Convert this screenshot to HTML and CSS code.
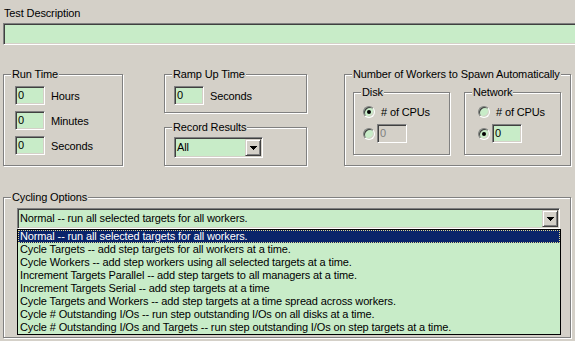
FILE: index.html
```html
<!DOCTYPE html>
<html lang="en">
<head>
    <meta charset="UTF-8">
    <meta name="viewport" content="width=device-width, initial-scale=1.0">
    <title>Test Setup</title>
    <link rel="stylesheet" href="styles.css">
</head>
<body>

<div class="dialog">
    <div class="desc-label">Test Description</div>
    <div class="edit desc-edit"></div>

    <div class="top-row">
        <!-- Run Time -->
        <div class="group run-time">
            <span class="legend">Run Time</span>
            <div class="field-row"><div class="edit small">0</div><span>Hours</span></div>
            <div class="field-row"><div class="edit small">0</div><span>Minutes</span></div>
            <div class="field-row"><div class="edit small">0</div><span>Seconds</span></div>
        </div>

        <div class="middle-col">
            <div class="group ramp">
                <span class="legend">Ramp Up Time</span>
                <div class="field-row"><div class="edit small">0</div><span>Seconds</span></div>
            </div>
            <div class="group record">
                <span class="legend">Record Results</span>
                <div class="combo record-combo">
                    <span class="combo-text">All</span>
                    <span class="combo-btn"><svg width="7" height="4" viewBox="0 0 7 4"><path d="M0 0h7v1h-1v1h-1v1h-1v1h-1v-1h-1v-1h-1v-1h-1z"/></svg></span>
                </div>
            </div>
        </div>

        <!-- Number of Workers -->
        <div class="group workers">
            <span class="legend">Number of Workers to Spawn Automatically</span>
            <div class="group sub disk">
                <span class="legend">Disk</span>
                <div class="radio-row first"><span class="radio checked"></span><span>#&nbsp;of CPUs</span></div>
                <div class="radio-row second"><span class="radio"></span><div class="edit small disabled">0</div></div>
            </div>
            <div class="group sub network">
                <span class="legend">Network</span>
                <div class="radio-row first"><span class="radio"></span><span>#&nbsp;of CPUs</span></div>
                <div class="radio-row second"><span class="radio checked"></span><div class="edit small">0</div></div>
            </div>
        </div>
    </div>

    <!-- Cycling Options -->
    <div class="group cycling">
        <span class="legend">Cycling Options</span>
        <div class="combo cycle-combo">
            <span class="combo-text">Normal -- run all selected targets for all workers.</span>
            <span class="combo-btn"><svg width="7" height="4" viewBox="0 0 7 4"><path d="M0 0h7v1h-1v1h-1v1h-1v1h-1v-1h-1v-1h-1v-1h-1z"/></svg></span>
        </div>
        <div class="droplist">
            <div class="item selected">Normal -- run all selected targets for all workers.</div>
            <div class="item">Cycle Targets -- add step targets for all workers at a time.</div>
            <div class="item">Cycle Workers -- add step workers using all selected targets at a time.</div>
            <div class="item">Increment Targets Parallel -- add step targets to all managers at a time.</div>
            <div class="item">Increment Targets Serial -- add step targets at a time</div>
            <div class="item">Cycle Targets and Workers -- add step targets at a time spread across workers.</div>
            <div class="item">Cycle # Outstanding I/Os -- run step outstanding I/Os on all disks at a time.</div>
            <div class="item">Cycle # Outstanding I/Os and Targets -- run step outstanding I/Os on step targets at a time.</div>
        </div>
    </div>
</div>

</body>
</html>
```

FILE: styles.css
```css
* {
    box-sizing: border-box;
}
body {
    margin: 0;
    width: 575px;
    height: 341px;
    overflow: hidden;
    background-color: #d4d0c8;
    font-family: "Liberation Sans", Arial, sans-serif;
    font-size: 11px;
    letter-spacing: -0.13px;
    color: #000;
}
.dialog {
    padding: 7px 0 0 3px;
}
.desc-label {
    height: 16px;
    line-height: 13px;
    padding-left: 1px;
}

/* sunken edit box */
.edit {
    border: 1px solid;
    border-color: #808080 #fff #fff #808080;
    box-shadow: inset 1px 1px 0 #404040, inset -1px -1px 0 #d4d0c8;
    background-color: #c8ecc8;
    padding: 0 2px;
    white-space: nowrap;
}
.desc-edit {
    width: 580px;
    height: 22px;
}
.edit.small {
    width: 30px;
    height: 19px;
    line-height: 17px;
}
.edit.disabled {
    background-color: #d4d0c8;
    color: #808080;
}

/* etched group box */
.group {
    position: relative;
    border: 1px solid #808080;
    box-shadow: inset 1px 1px 0 #fff, 1px 1px 0 #fff;
}
.legend {
    position: absolute;
    top: -7px;
    left: 7px;
    padding: 0 1px;
    line-height: 13px;
    background-color: #d4d0c8;
    white-space: nowrap;
}

.top-row {
    display: flex;
    align-items: flex-start;
    margin-top: 29px;
}
.run-time {
    width: 120px;
    height: 92px;
    padding: 11px 0 0 11px;
    display: flex;
    flex-direction: column;
    gap: 6px;
}
.field-row {
    display: flex;
    align-items: center;
    gap: 6px;
}
.middle-col {
    margin-left: 41px;
    display: flex;
    flex-direction: column;
    gap: 14px;
}
.ramp {
    width: 143px;
    height: 39px;
    padding: 11px 0 0 9px;
}
.record {
    width: 143px;
    height: 39px;
    padding: 9px 0 0 9px;
}

/* combo box */
.combo {
    display: flex;
    border: 1px solid;
    border-color: #808080 #fff #fff #808080;
    box-shadow: inset 1px 1px 0 #404040, inset -1px -1px 0 #d4d0c8;
    background-color: #c8ecc8;
    padding: 1px;
    height: 21px;
}
.combo-text {
    flex: 1;
    padding-left: 1px;
    line-height: 17px;
    white-space: nowrap;
    overflow: hidden;
}
.combo-btn {
    width: 16px;
    height: 17px;
    display: flex;
    align-items: center;
    justify-content: center;
    background-color: #d4d0c8;
    border: 1px solid;
    border-color: #d4d0c8 #404040 #404040 #d4d0c8;
    box-shadow: inset 1px 1px 0 #fff, inset -1px -1px 0 #808080;
}
.combo-btn svg {
    display: block;
    shape-rendering: crispEdges;
}
.record-combo {
    width: 89px;
}

.workers {
    margin-left: 37px;
    width: 227px;
    height: 92px;
    padding: 17px 0 0 8px;
    display: flex;
    gap: 14px;
}
.sub {
    width: 97px;
    height: 63px;
    padding: 13px 0 0 9px;
}
.sub.network {
    padding-left: 13px;
}
.radio-row {
    display: flex;
    align-items: center;
}
.radio-row.first {
    height: 12px;
    gap: 6px;
}
.radio-row.second {
    margin-top: 6px;
    gap: 2px;
}
.radio {
    position: relative;
    width: 12px;
    height: 12px;
    border-radius: 50%;
    border: 1px solid;
    border-color: #808080 #fff #fff #808080;
    box-shadow: inset 1px 1px 0 #404040, inset -1px -1px 0 #d4d0c8;
    background-color: #c8ecc8;
}
.radio.checked::after {
    content: "";
    position: absolute;
    top: 3px;
    left: 3px;
    width: 4px;
    height: 4px;
    border-radius: 50%;
    background-color: #000;
}

.cycling {
    margin-top: 31px;
    width: 568px;
    height: 141px;
    padding: 10px 0 0 13px;
}
.cycle-combo {
    width: 543px;
}
.droplist {
    width: 544px;
    border: 1px solid #000;
    background-color: #c8ecc8;
}
.item {
    height: 13px;
    line-height: 13px;
    padding-left: 2px;
    white-space: nowrap;
}
.item.selected {
    background-color: #0a246a;
    color: #fff;
    outline: 1px dotted #e0d890;
    outline-offset: -1px;
}
```
